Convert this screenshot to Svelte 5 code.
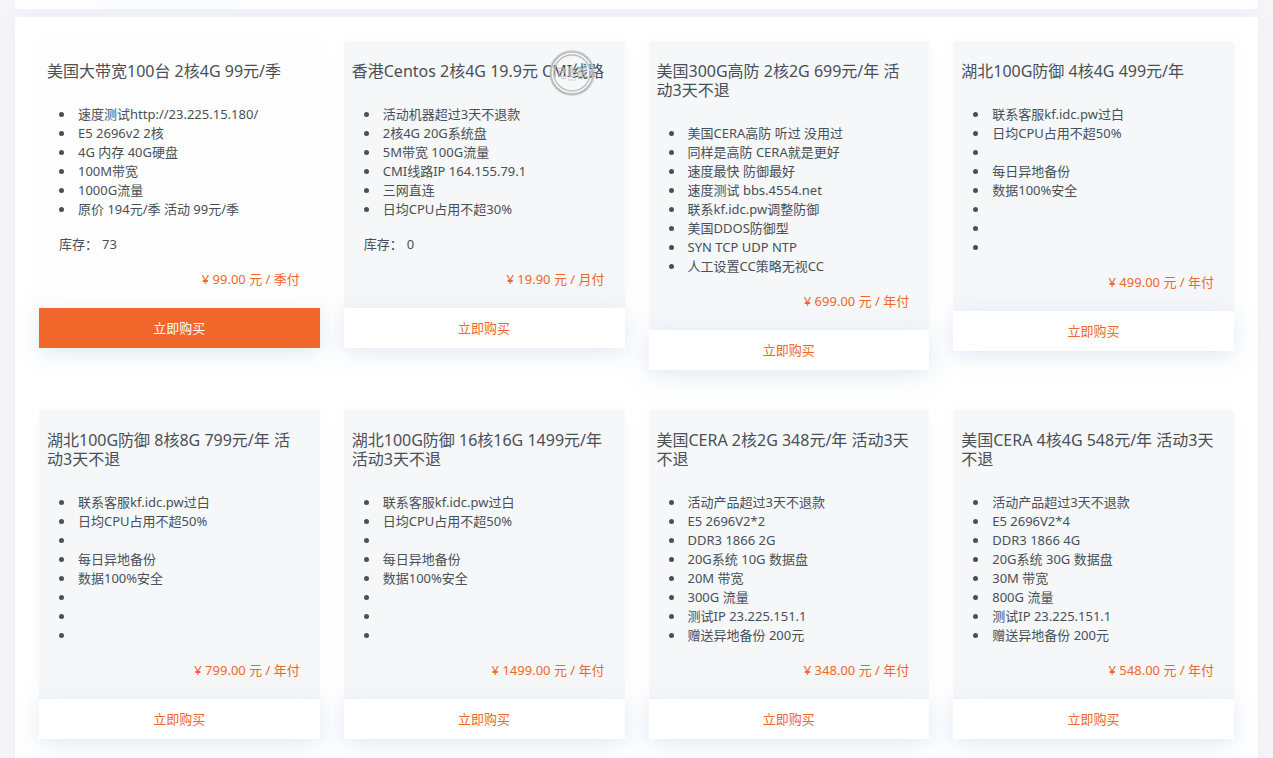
<script>
  const protectedHubei = ['联系客服kf.idc.pw过白', '日均CPU占用不超50%', '', '每日异地备份', '数据100%安全', '', '', ''];

  const plans = [
    {
      title: ['美国大带宽100台 2核4G 99元/季'],
      specs: ['速度测试http://23.225.15.180/', 'E5 2696v2 2核', '4G 内存 40G硬盘', '100M带宽', '1000G流量', '原价 194元/季 活动 99元/季'],
      stock: 73, price: '99.00', term: '季付', active: true
    },
    {
      title: ['香港Centos 2核4G 19.9元 CMI线路'],
      specs: ['活动机器超过3天不退款', '2核4G 20G系统盘', '5M带宽 100G流量', 'CMI线路IP 164.155.79.1', '三网直连', '日均CPU占用不超30%'],
      stock: 0, price: '19.90', term: '月付', soldOut: true
    },
    {
      title: ['美国300G高防 2核2G 699元/年 活', '动3天不退'],
      specs: ['美国CERA高防 听过 没用过', '同样是高防 CERA就是更好', '速度最快 防御最好', '速度测试 bbs.4554.net', '联系kf.idc.pw调整防御', '美国DDOS防御型', 'SYN TCP UDP NTP', '人工设置CC策略无视CC'],
      price: '699.00', term: '年付'
    },
    { title: ['湖北100G防御 4核4G 499元/年'], specs: protectedHubei, price: '499.00', term: '年付' },
    { title: ['湖北100G防御 8核8G 799元/年 活', '动3天不退'], specs: protectedHubei, price: '799.00', term: '年付' },
    { title: ['湖北100G防御 16核16G 1499元/年', '活动3天不退'], specs: protectedHubei, price: '1499.00', term: '年付' },
    {
      title: ['美国CERA 2核2G 348元/年 活动3天', '不退'],
      specs: ['活动产品超过3天不退款', 'E5 2696V2*2', 'DDR3 1866 2G', '20G系统 10G 数据盘', '20M 带宽', '300G 流量', '测试IP 23.225.151.1', '赠送异地备份 200元'],
      price: '348.00', term: '年付'
    },
    {
      title: ['美国CERA 4核4G 548元/年 活动3天', '不退'],
      specs: ['活动产品超过3天不退款', 'E5 2696V2*4', 'DDR3 1866 4G', '20G系统 30G 数据盘', '30M 带宽', '800G 流量', '测试IP 23.225.151.1', '赠送异地备份 200元'],
      price: '548.00', term: '年付'
    }
  ];
</script>

<main class="page">
  <div class="filters"><div class="tab"></div></div>
  <section class="panel">
    {#each plans as plan}
      <article class="card" class:active={plan.active}>
        <h2>{#each plan.title as line}<span>{line}</span>{/each}</h2>
        <ul>
          {#each plan.specs as spec}<li>{spec}</li>{/each}
        </ul>
        {#if plan.stock !== undefined}
          <p class="stock"><span>库存：</span><span>{plan.stock}</span></p>
        {/if}
        <p class="price">¥ {plan.price} 元 / {plan.term}</p>
        <button type="button">立即购买</button>
        {#if plan.soldOut}
          <svg class="stamp" viewBox="0 0 46 46" aria-hidden="true">
            <g fill="none" stroke="#bcbdbe">
              <circle cx="23" cy="23" r="21.2" stroke-width="1.8" />
              <circle cx="23" cy="23" r="22.3" stroke-width="1.2" stroke-dasharray="1.4 1" />
              <circle cx="23" cy="23" r="18" stroke-width="1.3" />
            </g>
            <text x="23" y="26" text-anchor="middle" font-size="10" font-weight="700" fill="#b9babb" fill-opacity="0.75">已售罄</text>
            <path d="M12 28.5h5m12 0h5M19 30h2m1 0h2m1 0h2" stroke="#c4c5c6" />
          </svg>
        {/if}
      </article>
    {/each}
  </section>
</main>

<style>
  :global(body) {
    margin: 0;
    background: #f6f6f9;
  }
  .page {
    display: flex;
    flex-direction: column;
    gap: 8px;
    padding: 0 15px;
    color: #495057;
    font: 13px/19px "Noto Sans", "Noto Sans CJK SC", sans-serif;
    height: 100vh;
    overflow: hidden;
    box-sizing: border-box;
  }
  .filters,
  .panel {
    background: #fff;
    box-shadow: 0 0 20px rgba(225, 230, 244, 0.4);
  }
  .filters {
    flex: none;
    height: 9px;
    border-radius: 0 0 3px 3px;
    overflow: hidden;
  }
  .tab {
    width: 140px;
    height: 1px;
    margin: -4px 0 0 84px;
    box-shadow: 0 2px 16px 2px rgba(200, 208, 225, 0.3);
  }
  .panel {
    display: grid;
    grid-template-columns: repeat(4, minmax(0, 1fr));
    gap: 40px 24px;
    align-items: start;
    padding: 24px 24px 40px;
    border-radius: 3px;
  }
  .card {
    position: relative;
    display: flex;
    flex-direction: column;
    border-radius: 4px 4px 0 0;
    background: #f5f7f9;
    box-shadow: 0 0 16px rgba(120, 130, 150, 0.04);
  }
  h2 {
    margin: 0;
    padding: 21px 8px 0;
    font-size: 16px;
    line-height: 19px;
    font-weight: 400;
    white-space: nowrap;
  }
  h2 span {
    display: block;
  }
  ul {
    margin: 24px 0 0;
    padding: 0 20px;
    list-style: none;
  }
  li {
    display: flex;
    align-items: center;
    gap: 14px;
    min-height: 19px;
  }
  li::before {
    content: "";
    width: 5px;
    height: 5px;
    border-radius: 50%;
    background: currentColor;
  }
  .stock,
  .price {
    margin: 16px 20px 0;
  }
  .stock {
    display: flex;
    gap: 4px;
  }
  .price {
    color: #f1662a;
    text-align: right;
  }
  button {
    height: 40px;
    margin-top: 19px;
    padding: 0;
    border: 0;
    background: #fff;
    color: #f1662a;
    font: inherit;
    cursor: pointer;
    box-shadow: 0 6px 24px rgba(150, 180, 215, 0.25);
  }
  .active {
    background: #fefefe;
  }
  .active button {
    background: #f1662a;
    color: #fff;
  }
  .stamp {
    position: absolute;
    top: 9px;
    right: 30px;
    width: 46px;
    height: 46px;
  }
</style>
